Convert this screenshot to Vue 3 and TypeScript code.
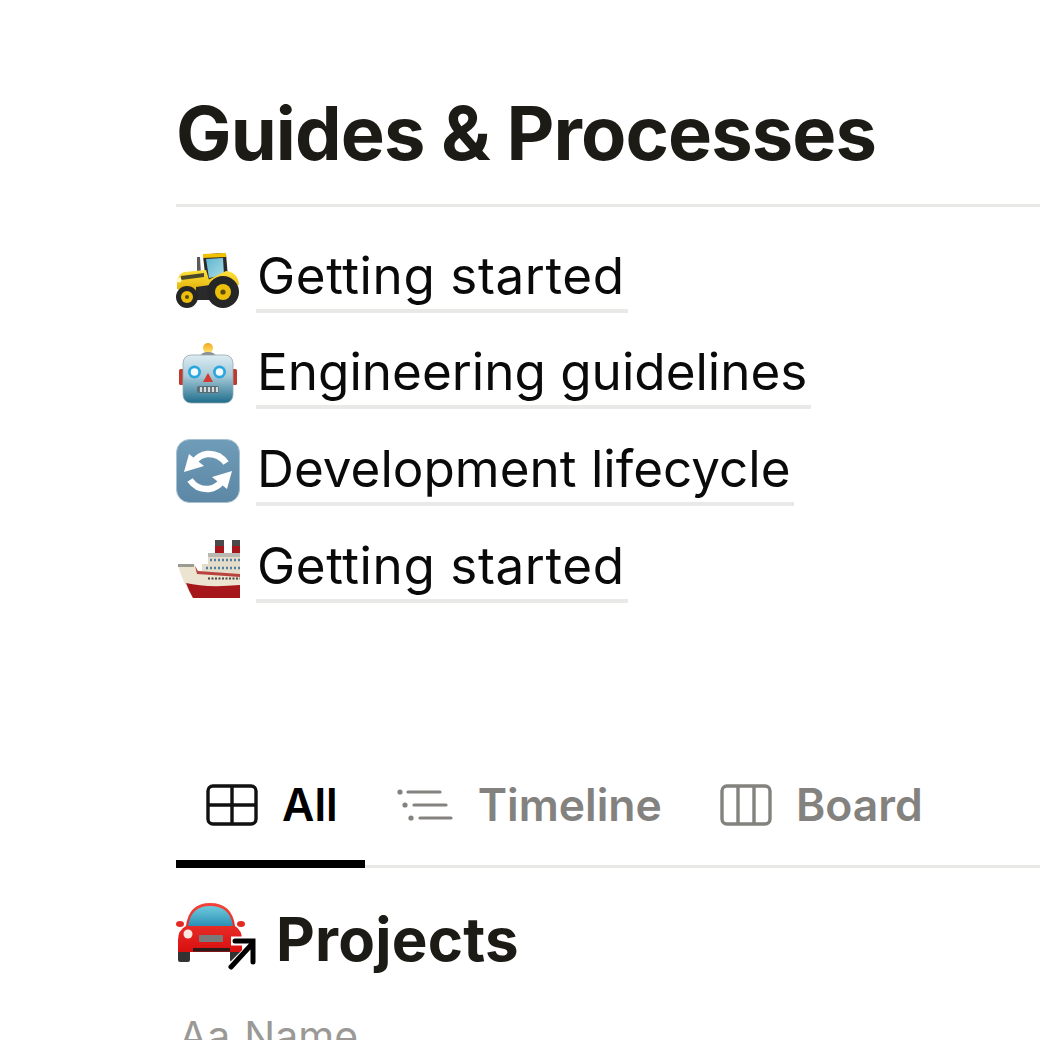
<script setup lang="ts">
const links: { label: string; icon: string; wide: boolean }[] = [
  { label: 'Getting started', icon: 'tractor', wide: true },
  { label: 'Engineering guidelines', icon: 'robot', wide: false },
  { label: 'Development lifecycle', icon: 'sync', wide: false },
  { label: 'Getting started', icon: 'ship', wide: true },
]
</script>

<template>
  <main class="page">
    <h1 class="title">Guides &amp; Processes</h1>
    <ul class="links">
      <li v-for="(link, i) in links" :key="i" class="link-row">
        <svg v-if="link.icon === 'tractor'" class="emoji" viewBox="0 -4 64 64">
          <defs>
            <linearGradient id="ty" x1="0" y1="0" x2="0" y2="1"><stop offset="0" stop-color="#ffe23a" /><stop offset="1" stop-color="#dca500" /></linearGradient>
            <linearGradient id="tg" x1="0" y1="0" x2="1" y2="1"><stop offset="0" stop-color="#5fb6cf" /><stop offset="1" stop-color="#a9dbe6" /></linearGradient>
          </defs>
          <path d="M21 8 L24 8 L25 26 L21 26 Z" fill="#5a5a5a" />
          <path d="M27 7 Q38 3 50 5 L52 28 L30 33 Z" fill="#2a2a2a" />
          <path d="M27 5 L50 4 L50 8 L27 9 Z" fill="#f2c200" />
          <path d="M30 10 L47 9 L48 26 L33 29 Z" fill="url(#tg)" />
          <path d="M1 34 Q1 26 8 23 L30 21 L34 34 L30 46 L20 44 L1 40 Z" fill="url(#ty)" />
          <path d="M5 27 L28 24 L28 28 L5 31 Z" fill="#4a4a2a" />
          <path d="M30 32 L50 22 Q62 23 63 36 L42 36 L36 48 L22 48 Z" fill="url(#ty)" />
          <path d="M20 38 L34 36 L34 51 L20 51 Z" fill="#2a2a2a" />
          <circle cx="47" cy="43" r="16" fill="#262626" />
          <circle cx="47" cy="43" r="8" fill="#eebf0a" />
          <circle cx="47" cy="43" r="2.600" fill="#5a4a10" />
          <circle cx="11" cy="48" r="11" fill="#262626" />
          <circle cx="11" cy="48" r="6" fill="#eebf0a" />
          <circle cx="11" cy="48" r="2" fill="#5a4a10" />
          <circle cx="3" cy="31" r="2.500" fill="#fff7c0" />
        </svg>

        <svg v-else-if="link.icon === 'robot'" class="emoji" viewBox="0 0 64 64">
          <defs>
            <linearGradient id="rb" x1="0" y1="0" x2="0" y2="1"><stop offset="0" stop-color="#dcecf2" /><stop offset="0.45" stop-color="#a5c8d6" /><stop offset="1" stop-color="#1d6d8c" /></linearGradient>
            <linearGradient id="rl" x1="0" y1="0" x2="0" y2="1"><stop offset="0" stop-color="#f6a623" /><stop offset="1" stop-color="#ffe46b" /></linearGradient>
          </defs>
          <circle cx="32" cy="6" r="5" fill="url(#rl)" />
          <path d="M24 15 Q25 10 32 10 Q39 10 40 15 Z" fill="#8b8f92" />
          <rect x="3" y="27" width="5" height="16" rx="1.5" fill="#c0392f" />
          <rect x="56" y="27" width="5" height="16" rx="1.5" fill="#c0392f" />
          <rect x="7" y="13" width="50" height="48" rx="8" fill="url(#rb)" stroke="#9aa6ac" stroke-width="0.8" />
          <circle cx="18.5" cy="30" r="6.5" fill="#29a6df" />
          <circle cx="18.5" cy="30" r="3.8" fill="#f3fbff" />
          <circle cx="43.5" cy="30" r="6.5" fill="#29a6df" />
          <circle cx="43.5" cy="30" r="3.8" fill="#f3fbff" />
          <path d="M32 31 L37 40 L27 40 Z" fill="#d23a32" />
          <rect x="21" y="44" width="22" height="7" rx="2" fill="#5d6c72" />
          <path d="M25 45 V50 M29 45 V50 M33 45 V50 M37 45 V50 M41 45 V50" stroke="#d3dde0" stroke-width="2.2" />
        </svg>

        <svg v-else-if="link.icon === 'sync'" class="emoji" viewBox="0 0 64 64">
          <defs>
            <linearGradient id="sb" x1="0" y1="0" x2="0" y2="1"><stop offset="0" stop-color="#6f9cb8" /><stop offset="1" stop-color="#5c87a5" /></linearGradient>
          </defs>
          <rect x="0.5" y="0.5" width="63" height="63" rx="13" fill="url(#sb)" stroke="#a9c2d2" />
          <path d="M50 24 Q43 14 31 15 Q23 16 18 23" fill="none" stroke="#fff" stroke-width="6.5" />
          <path d="M8 33 L13 15 L28 27 Z" fill="#fff" />
          <path d="M14 41 Q21 51 33 50 Q41 49 46 42" fill="none" stroke="#fff" stroke-width="6.5" />
          <path d="M56 32 L51 50 L36 38 Z" fill="#fff" />
        </svg>

        <svg v-else class="emoji" viewBox="4 -2 64 64">
          <path d="M43 3 H52 V17 H43 Z" fill="#a5171b" />
          <rect x="43" y="3" width="9" height="6" fill="#4a4a4a" />
          <rect x="60" y="3" width="8" height="15" fill="#a5171b" />
          <rect x="60" y="3" width="8" height="6" fill="#4a4a4a" />
          <path d="M36 17 H68 V38 H30 V27 H36 Z" fill="#e5ddc9" />
          <rect x="36" y="16" width="32" height="4" fill="#b9b9b2" />
          <path d="M38 23 H68 M34 31 H68" stroke="#4f7fa1" stroke-width="2.4" stroke-dasharray="2 2" />
          <path d="M6 28 H23 L26 34 L68 37 V61 H21 Q10 44 6 28 Z" fill="#ece4d0" />
          <rect x="6" y="27" width="16" height="3" fill="#9b9b92" />
          <path d="M23 29 L26 34 L68 37 V40 L25 37 Z" fill="#b8433f" />
          <path d="M36 41.500 H68" stroke="#444" stroke-width="2.200" stroke-dasharray="2 1.500" />
          <path d="M14 46 Q34 51 68 48 V61 H21 Q17 54 14 46 Z" fill="#a5171b" />
        </svg>
        <a class="link" :class="{ 'link-wide': link.wide }" href="#" @click.prevent>{{ link.label }}</a>
      </li>
    </ul>

    <nav class="tabs">
      <div class="tab tab-active">
        <svg class="tab-icon" viewBox="0 0 52 42" fill="none" stroke="#111" stroke-width="3.400">
          <rect x="2" y="2" width="48" height="38" rx="5" />
          <path d="M26 2 V40 M2 21 H50" />
        </svg>
        <span>All</span>
      </div>
      <div class="tab tab-timeline">
        <svg class="tab-icon" viewBox="0 0 56 42" fill="none" stroke="#83827e" stroke-width="3.200" stroke-linecap="round">
          <path d="M11 8 H43 M17 21 H49 M23 34 H54" />
          <g fill="#83827e" stroke="none"><circle cx="3" cy="8" r="2.600" /><circle cx="8" cy="21" r="2.600" /><circle cx="14" cy="34" r="2.600" /></g>
        </svg>
        <span>Timeline</span>
      </div>
      <div class="tab">
        <svg class="tab-icon" viewBox="0 0 52 42" fill="none" stroke="#83827e" stroke-width="3.400">
          <rect x="2" y="2" width="48" height="38" rx="5" />
          <path d="M18 2 V40 M34 2 V40" />
        </svg>
        <span>Board</span>
      </div>
    </nav>

    <h2 class="section">
      <svg class="car" viewBox="4 0 84 70">
        <defs>
          <linearGradient id="cg" x1="0" y1="0" x2="0" y2="1"><stop offset="0" stop-color="#6fcbdc" /><stop offset="1" stop-color="#2d8fb6" /></linearGradient>
          <linearGradient id="cr" x1="0" y1="0" x2="0" y2="1"><stop offset="0" stop-color="#f4453a" /><stop offset="1" stop-color="#d80f0f" /></linearGradient>
        </defs>
        <rect x="6" y="48" width="12" height="14" rx="2" fill="#333" />
        <rect x="58" y="48" width="12" height="14" rx="2" fill="#333" />
        <ellipse cx="8" cy="24" rx="4" ry="3" fill="#e22a22" />
        <ellipse cx="69" cy="24" rx="4" ry="3" fill="#e22a22" />
        <path d="M14 26 Q17 3 38 3 Q60 3 63 26 Q70 30 70 40 V52 H6 V40 Q6 30 14 26 Z" fill="url(#cr)" />
        <path d="M16 26 Q19 6 38 6 Q58 6 61 26 Z" fill="url(#cg)" />
        <circle cx="16" cy="34" r="4.500" fill="#fbe9e2" />
        <rect x="27" y="35" width="24" height="7" rx="1" fill="#7a7a7a" />
        <rect x="21" y="48" width="37" height="3.500" fill="#2a1a1a" />
        <path d="M59 69 L85 43" stroke="#fff" stroke-width="11" fill="none" />
        <path d="M59 41 H81 V64" stroke="#fff" stroke-width="9" fill="none" />
        <path d="M59 67 L80 44 M63 41 H81 V62" stroke="#000" stroke-width="5" fill="none" stroke-linecap="round" />
      </svg>
      <span>Projects</span>
    </h2>

    <div class="prop-head"><span class="aa">Aa</span><span>Name</span></div>
  </main>
</template>

<style>
html, body { margin: 0; background: #fff; }
</style>

<style scoped>
.page {
  width: 1040px;
  height: 1040px;
  box-sizing: border-box;
  overflow: hidden;
  background: #fff;
  padding: 92px 0 0 176px;
  font-family: Inter, "Liberation Sans", sans-serif;
}
.title {
  margin: 0;
  height: 115px;
  border-bottom: 3px solid #e9e9e7;
  font-size: 74px;
  line-height: 82px;
  font-weight: 700;
  letter-spacing: -0.9px;
  color: #1d1b16;
  white-space: nowrap;
  box-sizing: border-box;
}
.links {
  list-style: none;
  margin: 0;
  padding: 22px 0 0;
  height: 555px;
  box-sizing: border-box;
}
.link-row {
  height: 96.67px;
  display: flex;
  align-items: center;
  gap: 16px;
  position: relative;
}
.emoji { width: 64px; height: 64px; flex: none; }
.link {
  color: #0a0a0a;
  text-decoration: none;
  font-size: 51.2px;
  line-height: 67px;
  border-bottom: 4px solid #e9e9e7;
  padding: 0 3.5px 0 1px;
  white-space: nowrap;
}
.link-wide { letter-spacing: 0.58px; }
.tabs {
  display: flex;
  height: 106px;
  box-sizing: border-box;
  border-bottom: 3px solid #e9e9e7;
  gap: 2px;
  font-size: 44.5px;
  font-weight: 600;
  color: #83827e;
}
.tab {
  display: flex;
  align-items: flex-start;
  gap: 24px;
  padding: 11px 28px 0 30px;
  height: 103px;
  box-sizing: border-box;
  line-height: 64px;
}
.tab-icon { height: 42px; width: auto; margin-top: 11px; flex: none; }
.tab-timeline { gap: 25px; padding-right: 26px; }
.tab-active {
  color: #000;
  height: 106px;
  padding-right: 27px;
  border-bottom: 8px solid #000;
}
.section {
  margin: 0;
  display: flex;
  gap: 16px;
  height: 143px;
  font-size: 60px;
  font-weight: 700;
  letter-spacing: 0.2px;
  color: #1d1b16;
  align-items: flex-start;
  padding-top: 32px;
  box-sizing: border-box;
}
.car { width: 84px; height: 70px; flex: none; }
.section span { line-height: 70px; margin-top: 4px; }
.prop-head {
  display: flex;
  gap: 14px;
  padding-left: 3px;
  font-size: 41px;
  color: #9a9996;
}
</style>
